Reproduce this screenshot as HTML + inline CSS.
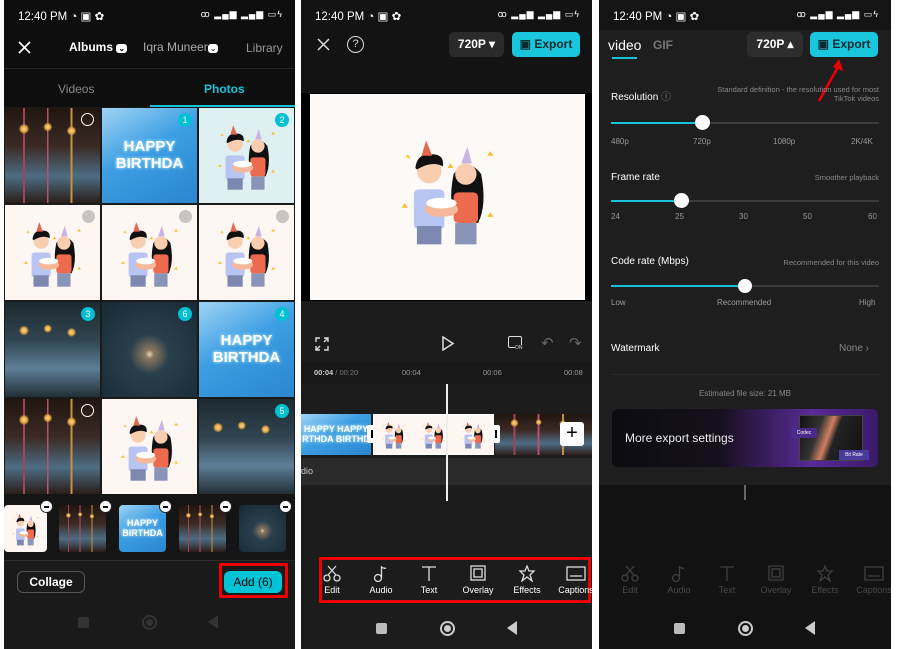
<!DOCTYPE html>
<html><head><meta charset="utf-8"><style>
*{margin:0;padding:0;box-sizing:border-box}
body{width:897px;height:649px;background:#fff;position:relative;overflow:hidden;font-family:"Liberation Sans",sans-serif;color:#fff}
.a{position:absolute}
.p{position:absolute;top:0;height:649px;overflow:hidden}
.sb{position:absolute;top:9px;left:14px;font-size:11.5px;color:#fff;white-space:nowrap}
.sr{position:absolute;top:9px;right:12px;font-size:9px;color:#fff;white-space:nowrap;letter-spacing:1px}
.cand{background:radial-gradient(circle at 20% 22%,#ffe090 0,#e0a040 3%,transparent 5%),radial-gradient(circle at 45% 20%,#ffe090 0,#e0a040 3%,transparent 5%),radial-gradient(circle at 70% 24%,#ffe090 0,#e0a040 3%,transparent 5%),linear-gradient(90deg,transparent 19%,#a8405a 19%,#a8405a 21%,transparent 21%,transparent 44%,#b85070 44%,#b85070 46%,transparent 46%,transparent 69%,#c89040 69%,#c89040 71%,transparent 71%),linear-gradient(#20160f,#3a2a24 40%,#4d6d84 72%,#2a1d18)}
.cand2{background:radial-gradient(circle at 20% 30%,#ffe090 0,#e0a040 3%,transparent 5%),radial-gradient(circle at 45% 28%,#ffe090 0,#e0a040 3%,transparent 5%),radial-gradient(circle at 70% 32%,#ffe090 0,#e0a040 3%,transparent 5%),linear-gradient(#1d2a30,#304450 40%,#5d7f98 70%,#222e34)}
.hb{background:linear-gradient(150deg,#9fd4f5,#3c9ee3 45%,#2a86d0);display:flex;align-items:center;justify-content:center;text-align:center;font-weight:bold;color:#fff;line-height:1.1;font-size:15px;text-shadow:0 0 3px #dff}
.sp{background:radial-gradient(circle at 50% 55%,#e8d8b0 0,#8a7860 6%,#2a3f4c 28%,#172a35 100%)}
.cp{background:#fdf6f3}
.cp svg{width:100%;height:100%}
.sel{position:absolute;width:14px;height:14px;border-radius:50%;background:#00c0d4;font-size:9px;text-align:center;line-height:14px;color:#fff}
.un{position:absolute;width:13px;height:13px;border-radius:50%;background:#c8c4c4}
.mn{position:absolute;width:13px;height:13px;border-radius:50%;background:#fff;border:1px solid #222}
.mn:after{content:"";position:absolute;left:3px;top:5px;width:5px;height:1.6px;background:#111}
.btn{position:absolute;border-radius:5px;font-size:12px;font-weight:bold;text-align:center}
.tb{position:absolute;text-align:center;font-size:9px;width:50px}
.tb svg{display:block;margin:0 auto 3px}
</style></head><body>
<svg width="0" height="0" style="position:absolute"><defs>
<g id="cpl">
<polygon points="22,30 24,27 26,30 23,29" fill="#f5c22a"/><polygon points="76,28 78,25 80,28" fill="#f5c22a"/><polygon points="50,36 52,33 54,36" fill="#f5c22a"/><polygon points="20,62 22,59 24,62" fill="#f5c22a"/><polygon points="76,68 78,65 80,68" fill="#f5c22a"/>
<rect x="28" y="50" width="20" height="26" rx="3" fill="#b8c4f2"/>
<rect x="30" y="74" width="16" height="12" fill="#7d88b0"/>
<circle cx="38" cy="38" r="8" fill="#f8cdb0"/>
<path d="M29 36 Q30 26 40 27 Q48 27 47 35 Q40 31 30 37Z" fill="#111"/>
<polygon points="33,28 36,18 40,28" fill="#e06a50"/>
<path d="M54 40 Q50 60 56 70 L70 72 Q76 60 72 40 Q63 28 54 40Z" fill="#111"/>
<circle cx="62" cy="40" r="7" fill="#f8cdb0"/>
<rect x="54" y="52" width="16" height="20" rx="3" fill="#ee6a4f"/>
<rect x="55" y="72" width="14" height="14" fill="#8a93b8"/>
<polygon points="59,33 63,22 66,33" fill="#c9b4e6"/>
<ellipse cx="46" cy="63" rx="11" ry="5" fill="#f6b898"/><ellipse cx="46" cy="59" rx="10" ry="3.5" fill="#fff"/>
</g></defs></svg>

<!-- PANEL 1 -->
<div class="p" style="left:4px;width:291px;background:#1a1a1a">
 <div class="a" style="left:0;top:0;width:291px;height:107px;background:#0e0e0e"></div>
 <div class="sb">12:40 PM ◔ ▣ ✿</div><div class="sr">ꝏ ▂▄▆ ▂▄▆ ▭ϟ</div>
 <svg class="a" style="left:14px;top:41px" width="13" height="13"><path d="M1 1L12 12M12 1L1 12" stroke="#fff" stroke-width="1.6"/></svg>
 <div class="a" style="left:65px;top:40px;font-size:12px;font-weight:bold">Albums <span style="background:#fff;color:#000;border-radius:3px;font-size:8px;padding:0 2px">⌄</span></div>
 <div class="a" style="left:139px;top:40px;font-size:12px;color:#aaa">Iqra Muneer<span style="background:#fff;color:#000;border-radius:3px;font-size:8px;padding:0 2px">⌄</span></div>
 <div class="a" style="left:242px;top:41px;font-size:12px;color:#999">Library</div>
 <div class="a" style="left:0;top:68px;width:291px;height:1px;background:#262626"></div>
 <div class="a" style="left:54px;top:82px;font-size:12px;color:#888">Videos</div>
 <div class="a" style="left:200px;top:82px;font-size:12px;font-weight:bold;color:#19c2d8">Photos</div>
 <div class="a" style="left:146px;top:105px;width:145px;height:2px;background:#19c2d8"></div>
 <div class="a cand" style="left:1px;top:108px;width:95px;height:95px"></div><div class="un" style="left:77px;top:113px;background:none;border:1.5px solid #fff"></div>
 <div class="a hb" style="left:98px;top:108px;width:95px;height:95px">HAPPY<br>BIRTHDA</div><div class="sel" style="left:174px;top:113px">1</div>
 <div class="a cp" style="left:195px;top:108px;width:95px;height:95px;background:#dff0f2"><svg viewBox="0 0 100 100"><use href="#cpl"/></svg></div><div class="sel" style="left:271px;top:113px">2</div>
 <div class="a cp" style="left:1px;top:205px;width:95px;height:95px"><svg viewBox="0 0 100 100"><use href="#cpl"/></svg></div><div class="un" style="left:78px;top:210px"></div>
 <div class="a cp" style="left:98px;top:205px;width:95px;height:95px"><svg viewBox="0 0 100 100"><use href="#cpl"/></svg></div><div class="un" style="left:175px;top:210px"></div>
 <div class="a cp" style="left:195px;top:205px;width:95px;height:95px"><svg viewBox="0 0 100 100"><use href="#cpl"/></svg></div><div class="un" style="left:272px;top:210px"></div>
 <div class="a cand2" style="left:1px;top:302px;width:95px;height:95px"></div><div class="sel" style="left:77px;top:307px">3</div>
 <div class="a sp" style="left:98px;top:302px;width:95px;height:95px"></div><div class="sel" style="left:174px;top:307px">6</div>
 <div class="a hb" style="left:195px;top:302px;width:95px;height:95px">HAPPY<br>BIRTHDA</div><div class="sel" style="left:271px;top:307px">4</div>
 <div class="a cand" style="left:1px;top:399px;width:95px;height:95px"></div><div class="un" style="left:77px;top:404px;background:none;border:1.5px solid #fff"></div>
 <div class="a cp" style="left:98px;top:399px;width:95px;height:95px"><svg viewBox="0 0 100 100"><use href="#cpl"/></svg></div>
 <div class="a cand2" style="left:195px;top:399px;width:95px;height:95px"></div><div class="sel" style="left:271px;top:404px">5</div>
 <div class="a" style="left:0;top:494px;width:291px;height:66px;background:#151515"></div>
 <div class="a cp" style="left:0;top:505px;width:43px;height:47px;border-radius:4px"><svg viewBox="0 0 100 100" preserveAspectRatio="none"><use href="#cpl"/></svg></div><div class="mn" style="left:36px;top:500px"></div>
 <div class="a cand" style="left:55px;top:505px;width:47px;height:47px;border-radius:4px"></div><div class="mn" style="left:95px;top:500px"></div>
 <div class="a hb" style="left:115px;top:505px;width:47px;height:47px;border-radius:4px;font-size:9px">HAPPY<br>BIRTHDA</div><div class="mn" style="left:155px;top:500px"></div>
 <div class="a cand" style="left:175px;top:505px;width:47px;height:47px;border-radius:4px"></div><div class="mn" style="left:215px;top:500px"></div>
 <div class="a sp" style="left:235px;top:505px;width:47px;height:47px;border-radius:4px"></div><div class="mn" style="left:275px;top:500px"></div>
 <div class="a" style="left:0;top:560px;width:291px;height:1px;background:#2c2c2c"></div>
 <div class="btn" style="left:13px;top:571px;width:68px;height:22px;border:1px solid #555;border-radius:6px;line-height:20px;font-weight:bold;font-size:12px">Collage</div>
 <div class="btn" style="left:220px;top:571px;width:58px;height:22px;background:#00c4d6;color:#000;line-height:22px;border-radius:6px;font-weight:normal">Add (6)</div>
 <div class="a" style="left:215px;top:563px;width:69px;height:35px;border:3px solid #e00"></div>
 <div class="a" style="left:74px;top:617px;width:11px;height:11px;background:#333;border-radius:2px"></div>
 <div class="a" style="left:138px;top:615px;width:15px;height:15px;border:2px solid #333;border-radius:50%"><div class="a" style="left:2px;top:2px;width:7px;height:7px;background:#333;border-radius:50%"></div></div>
 <div class="a" style="left:204px;top:615px;width:0;height:0;border-top:7px solid transparent;border-bottom:7px solid transparent;border-right:10px solid #333"></div>
</div>

<!-- PANEL 2 -->
<div class="p" style="left:301px;width:291px;background:#1c1c1c">
 <div class="a" style="left:0;top:0;width:291px;height:93px;background:#131313"></div>
 <div class="a" style="left:0;top:93px;width:291px;height:208px;background:#000"></div>
 <div class="sb">12:40 PM ◔ ▣ ✿</div><div class="sr">ꝏ ▂▄▆ ▂▄▆ ▭ϟ</div>
 <svg class="a" style="left:16px;top:38px" width="13" height="13"><path d="M1 1L12 12M12 1L1 12" stroke="#ddd" stroke-width="1.5"/></svg>
 <div class="a" style="left:46px;top:36px;width:17px;height:17px;border:1.5px solid #ddd;border-radius:50%;font-size:11px;text-align:center;line-height:14px;color:#ddd">?</div>
 <div class="btn" style="left:148px;top:32px;width:55px;height:25px;background:#2a2a2a;line-height:25px">720P ▾</div>
 <div class="btn" style="left:211px;top:32px;width:68px;height:25px;background:#19c6db;color:#0a2a30;line-height:25px">▣ Export</div>
 <div class="a cp" style="left:9px;top:94px;width:275px;height:206px;background:#fdf9f6"><svg viewBox="-40 0 180 110" preserveAspectRatio="xMidYMid meet"><use href="#cpl"/></svg></div>
 <svg class="a" style="left:14px;top:337px" width="14" height="14" fill="none" stroke="#ddd" stroke-width="1.4"><path d="M1 5V1H5M9 1H13V5M13 9V13H9M5 13H1V9M1 13L5 9M13 1L9 5"/></svg>
 <svg class="a" style="left:140px;top:336px" width="14" height="15"><path d="M2 1L12 7.5L2 14Z" fill="none" stroke="#ddd" stroke-width="1.5"/></svg>
 <div class="a" style="left:207px;top:336px;width:14px;height:12px;border:1.5px solid #ddd;border-radius:2px"></div><div class="a" style="left:214px;top:345px;font-size:5px;background:#1c1c1c;color:#ddd">ON</div>
 <div class="a" style="left:240px;top:334px;font-size:15px;color:#666">↶</div><div class="a" style="left:268px;top:334px;font-size:15px;color:#666">↷</div>
 <div class="a" style="left:0;top:362px;width:291px;height:22px;background:#181818"></div>
 <div class="a" style="left:13px;top:368px;font-size:7.5px;color:#ccc;white-space:nowrap"><b>00:04</b> <span style="color:#777">/ 00:20</span></div>
 <div class="a" style="left:101px;top:368px;font-size:7.5px;color:#999">00:04</div>
 <div class="a" style="left:182px;top:368px;font-size:7.5px;color:#999">00:06</div>
 <div class="a" style="left:263px;top:368px;font-size:7.5px;color:#999">00:08</div>
 <div class="a hb" style="left:0;top:414px;width:70px;height:41px;font-size:9px">HAPPY HAPPY<br>RTHDA BIRTHD</div>
 <div class="a cp" style="left:72px;top:414px;width:121px;height:41px;border:1px solid #fff"><svg viewBox="0 0 300 100" preserveAspectRatio="none" width="121" height="41"><use href="#cpl"/><use href="#cpl" x="100"/><use href="#cpl" x="200"/></svg></div>
 <div class="a cand" style="left:194px;top:414px;width:97px;height:41px"></div>
 <div class="a" style="left:66px;top:425px;width:9px;height:18px;background:#fff;border-radius:2px"><div class="a" style="left:4px;top:5px;width:1.5px;height:8px;background:#000"></div></div>
 <div class="a" style="left:190px;top:425px;width:9px;height:18px;background:#fff;border-radius:2px"><div class="a" style="left:4px;top:5px;width:1.5px;height:8px;background:#000"></div></div>
 <div class="a" style="left:259px;top:422px;width:24px;height:24px;background:#fff;border-radius:3px;color:#000;font-size:20px;text-align:center;line-height:23px">+</div>
 <div class="a" style="left:0;top:458px;width:291px;height:27px;background:#2a2a2a;font-size:9px;color:#ccc;line-height:27px">dio</div>
 <div class="a" style="left:145px;top:384px;width:2px;height:117px;background:#eee"></div>
 <div class="a" style="left:18px;top:557px;width:272px;height:46px;border:3px solid #e00"></div>
 <div class="tb" style="left:6px;top:565px"><svg width="18" height="17" fill="none" stroke="#ddd" stroke-width="1.3"><circle cx="4" cy="13" r="3"/><circle cx="14" cy="13" r="3"/><path d="M5 10L13 1M13 10L5 1"/></svg>Edit</div>
 <div class="tb" style="left:55px;top:565px"><svg width="18" height="17" fill="none" stroke="#ddd" stroke-width="1.3"><circle cx="6" cy="13" r="3.5"/><path d="M9.5 13V2Q12 4 14 3"/></svg>Audio</div>
 <div class="tb" style="left:103px;top:565px"><svg width="18" height="17" fill="none" stroke="#ddd" stroke-width="1.3"><path d="M2 2H16M9 2V16"/></svg>Text</div>
 <div class="tb" style="left:152px;top:565px"><svg width="18" height="17" fill="none" stroke="#ddd" stroke-width="1.3"><rect x="2" y="1" width="14" height="14"/><rect x="5" y="4" width="8" height="8"/></svg>Overlay</div>
 <div class="tb" style="left:201px;top:565px"><svg width="18" height="17" fill="none" stroke="#ddd" stroke-width="1.3"><path d="M9 1L11 6L16 6L12 10L14 16L9 12L4 16L6 10L2 6L7 6Z"/></svg>Effects</div>
 <div class="tb" style="left:250px;top:565px"><svg width="20" height="17" fill="none" stroke="#ddd" stroke-width="1.3"><rect x="1" y="2" width="18" height="13"/><path d="M4 11H16"/></svg>Captions</div>
 <div class="a" style="left:75px;top:623px;width:11px;height:11px;background:#bbb;border-radius:2px"></div>
 <div class="a" style="left:139px;top:621px;width:15px;height:15px;border:2px solid #ccc;border-radius:50%"><div class="a" style="left:2px;top:2px;width:7px;height:7px;background:#ccc;border-radius:50%"></div></div>
 <div class="a" style="left:206px;top:621px;border-top:7px solid transparent;border-bottom:7px solid transparent;border-right:10px solid #ccc"></div>
</div>

<!-- PANEL 3 -->
<div class="p" style="left:599px;width:292px;background:#121212">
 <div class="a" style="left:0;top:0;width:292px;height:485px;background:#1e1e1e"></div>
 <div class="a" style="left:0;top:0;width:292px;height:30px;background:#141414"></div>
 <div class="sb">12:40 PM ◔ ▣ ✿</div><div class="sr">ꝏ ▂▄▆ ▂▄▆ ▭ϟ</div>
 <div class="a" style="left:9px;top:37px;font-size:14px">video</div>
 <div class="a" style="left:54px;top:38px;font-size:12px;color:#777;font-weight:bold">GIF</div>
 <div class="a" style="left:13px;top:57px;width:25px;height:2px;background:#19c2d8"></div>
 <div class="btn" style="left:148px;top:32px;width:56px;height:25px;background:#2d2d2d;line-height:25px">720P ▴</div>
 <div class="btn" style="left:211px;top:32px;width:68px;height:25px;background:#19c6db;color:#0a2a30;line-height:25px">▣ Export</div>
 <svg class="a" style="left:210px;top:55px" width="40" height="50"><path d="M10 46L30 10" stroke="#e00" stroke-width="2.5"/><path d="M30 4L34 16L24 12Z" fill="#e00"/></svg>
 <div class="a" style="left:12px;top:88px;font-size:10px">Resolution <span style="color:#888">ⓘ</span></div>
 <div class="a" style="left:100px;top:85px;width:180px;font-size:7.5px;color:#888;text-align:right;line-height:9px">Standard definition - the resolution used for most TikTok videos</div>
 <div class="a" style="left:12px;top:122px;width:268px;height:1.5px;background:#3a3a3a"></div>
 <div class="a" style="left:12px;top:122px;width:92px;height:2px;background:#19c2d8"></div>
 <div class="a" style="left:96px;top:115px;width:15px;height:15px;border-radius:50%;background:#fff"></div>
 <div class="a" style="left:12px;top:137px;font-size:8px;color:#999;width:268px"><span class="a" style="left:0">480p</span><span class="a" style="left:82px">720p</span><span class="a" style="left:162px">1080p</span><span class="a" style="left:240px">2K/4K</span></div>
 <div class="a" style="left:12px;top:172px;font-size:10px">Frame rate</div>
 <div class="a" style="left:180px;top:173px;width:100px;font-size:7.5px;color:#888;text-align:right">Smoother playback</div>
 <div class="a" style="left:12px;top:200px;width:268px;height:1.5px;background:#3a3a3a"></div>
 <div class="a" style="left:12px;top:200px;width:70px;height:2px;background:#19c2d8"></div>
 <div class="a" style="left:75px;top:193px;width:15px;height:15px;border-radius:50%;background:#fff"></div>
 <div class="a" style="left:12px;top:212px;font-size:8px;color:#999;width:268px"><span class="a" style="left:0">24</span><span class="a" style="left:64px">25</span><span class="a" style="left:128px">30</span><span class="a" style="left:192px">50</span><span class="a" style="left:257px">60</span></div>
 <div class="a" style="left:12px;top:256px;font-size:10px">Code rate (Mbps)</div>
 <div class="a" style="left:150px;top:258px;width:130px;font-size:7.5px;color:#888;text-align:right">Recommended for this video</div>
 <div class="a" style="left:12px;top:285px;width:268px;height:1.5px;background:#3a3a3a"></div>
 <div class="a" style="left:12px;top:285px;width:134px;height:2px;background:#19c2d8"></div>
 <div class="a" style="left:139px;top:279px;width:14px;height:14px;border-radius:50%;background:#fff"></div>
 <div class="a" style="left:12px;top:298px;font-size:8px;color:#999;width:268px"><span class="a" style="left:0">Low</span><span class="a" style="left:106px">Recommended</span><span class="a" style="left:248px">High</span></div>
 <div class="a" style="left:12px;top:343px;font-size:10px">Watermark</div>
 <div class="a" style="left:240px;top:343px;font-size:10px;color:#888">None ›</div>
 <div class="a" style="left:12px;top:374px;width:268px;height:1px;background:#2a2a2a"></div>
 <div class="a" style="left:0;top:389px;width:292px;text-align:center;font-size:8px;color:#888">Estimated file size: 21 MB</div>
 <div class="a" style="left:13px;top:409px;width:266px;height:58px;border-radius:6px;background:linear-gradient(90deg,#0c0c10 0,#14101c 40%,#5a2a9a 75%,#3a1a6a)"></div>
 <div class="a" style="left:26px;top:431px;font-size:12px;color:#eee">More export settings</div>
 <div class="a" style="left:200px;top:415px;width:64px;height:46px;background:linear-gradient(110deg,#111 0,#333 30%,#d08060 45%,#222 55%,#111);border:1px solid #444"></div>
 <div class="a" style="left:192px;top:428px;width:26px;height:10px;background:#4a2a8a;font-size:5px;line-height:10px;text-align:center">Codec</div>
 <div class="a" style="left:240px;top:450px;width:30px;height:10px;background:#4a3a9a;font-size:5px;line-height:10px;text-align:center">Bit Rate</div>
 <div class="a" style="left:145px;top:485px;width:1.5px;height:15px;background:#666"></div>
 <div style="opacity:.22">
 <div class="tb" style="left:6px;top:565px"><svg width="18" height="17" fill="none" stroke="#ddd" stroke-width="1.3"><circle cx="4" cy="13" r="3"/><circle cx="14" cy="13" r="3"/><path d="M5 10L13 1M13 10L5 1"/></svg>Edit</div>
 <div class="tb" style="left:55px;top:565px"><svg width="18" height="17" fill="none" stroke="#ddd" stroke-width="1.3"><circle cx="6" cy="13" r="3.5"/><path d="M9.5 13V2Q12 4 14 3"/></svg>Audio</div>
 <div class="tb" style="left:103px;top:565px"><svg width="18" height="17" fill="none" stroke="#ddd" stroke-width="1.3"><path d="M2 2H16M9 2V16"/></svg>Text</div>
 <div class="tb" style="left:152px;top:565px"><svg width="18" height="17" fill="none" stroke="#ddd" stroke-width="1.3"><rect x="2" y="1" width="14" height="14"/><rect x="5" y="4" width="8" height="8"/></svg>Overlay</div>
 <div class="tb" style="left:201px;top:565px"><svg width="18" height="17" fill="none" stroke="#ddd" stroke-width="1.3"><path d="M9 1L11 6L16 6L12 10L14 16L9 12L4 16L6 10L2 6L7 6Z"/></svg>Effects</div>
 <div class="tb" style="left:250px;top:565px"><svg width="20" height="17" fill="none" stroke="#ddd" stroke-width="1.3"><rect x="1" y="2" width="18" height="13"/><path d="M4 11H16"/></svg>Captions</div>
 </div>
 <div class="a" style="left:75px;top:623px;width:11px;height:11px;background:#bbb;border-radius:2px"></div>
 <div class="a" style="left:139px;top:621px;width:15px;height:15px;border:2px solid #ccc;border-radius:50%"><div class="a" style="left:2px;top:2px;width:7px;height:7px;background:#ccc;border-radius:50%"></div></div>
 <div class="a" style="left:206px;top:621px;border-top:7px solid transparent;border-bottom:7px solid transparent;border-right:10px solid #ccc"></div>
</div>
</body></html>
